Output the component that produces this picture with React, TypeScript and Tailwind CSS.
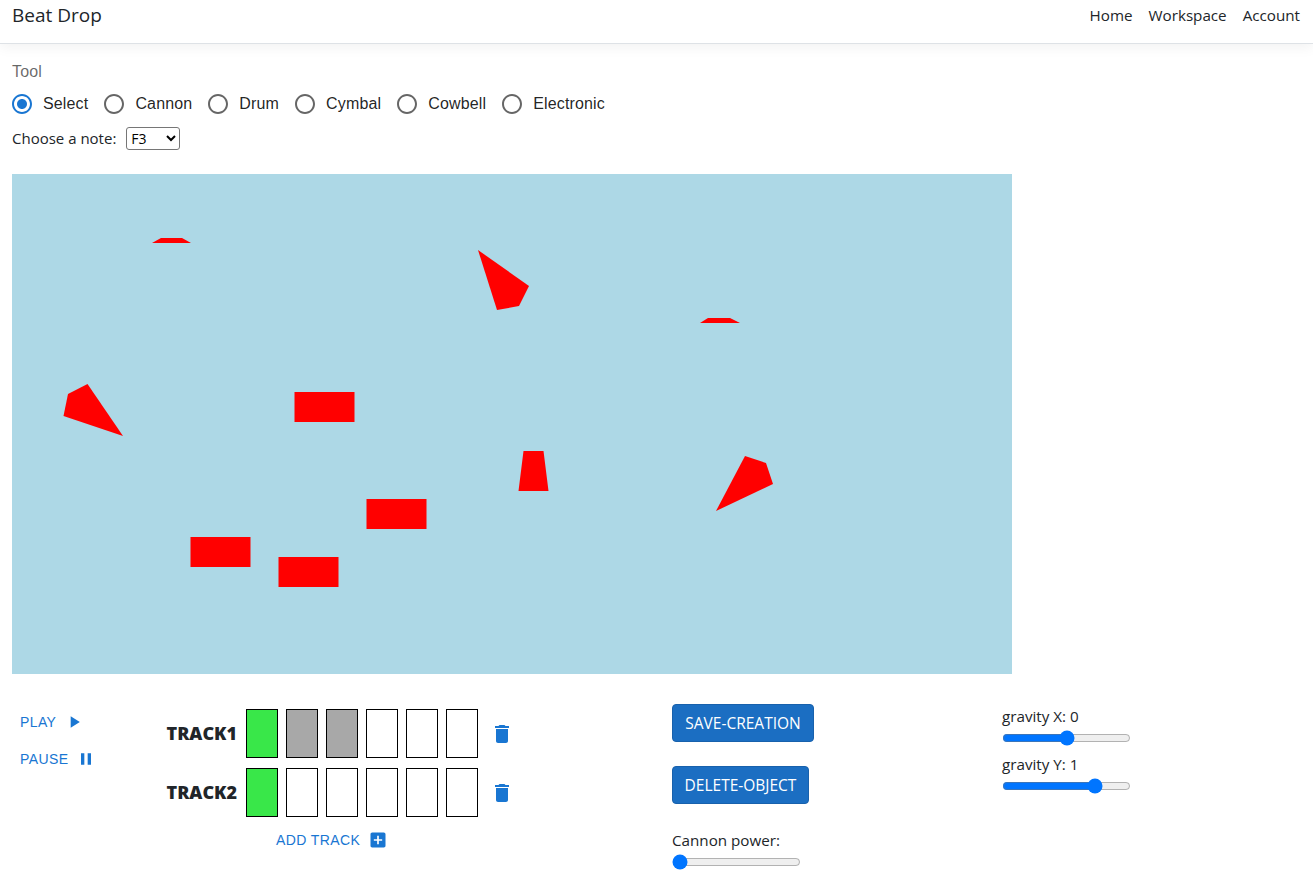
import React from 'react';

const SEGOE = "font-['Open_Sans',sans-serif]";
const MUI = "font-['Liberation_Sans',sans-serif]";

const tools = ['Select', 'Cannon', 'Drum', 'Cymbal', 'Cowbell', 'Electronic'];

const RadioIcon: React.FC<{ checked?: boolean }> = ({ checked }) => (
  <svg viewBox="0 0 24 24" className={`h-6 w-6 ${checked ? 'text-[#1976d2]' : 'text-black/60'}`} fill="currentColor">
    <path d="M12 2C6.48 2 2 6.48 2 12s4.48 10 10 10 10-4.48 10-10S17.52 2 12 2zm0 18c-4.42 0-8-3.58-8-8s3.58-8 8-8 8 3.58 8 8-3.58 8-8 8z" />
    {checked && <path d="M12 7c-2.76 0-5 2.24-5 5s2.24 5 5 5 5-2.24 5-5-2.24-5-5-5z" />}
  </svg>
);

const TrashIcon = () => (
  <svg viewBox="0 0 24 24" className="h-6 w-6 text-[#1976d2]" fill="currentColor">
    <path d="M6 19c0 1.1.9 2 2 2h8c1.1 0 2-.9 2-2V7H6v12zM19 4h-3.5l-1-1h-5l-1 1H5v2h14V4z" />
  </svg>
);

const Track: React.FC<{ name: string; cells: string[] }> = ({ name, cells }) => (
  <div className="flex items-center">
    <div className={`w-[100px] pb-[1px] text-right text-[18px] leading-none font-black text-[#212529] ${SEGOE}`}>{name}</div>
    <div className="ml-[9px] flex gap-2">
      {cells.map((c, i) => (
        <div
          key={i}
          className={`h-[49px] w-[32px] border border-black ${c === 'on' ? 'bg-[#39e749]' : c === 'off' ? 'bg-[#a8a8a8]' : 'bg-white'}`}
        />
      ))}
    </div>
    <div className="ml-3">
      <TrashIcon />
    </div>
  </div>
);

const Slider: React.FC<{ label: string; min: number; max: number; value: number }> = ({ label, min, max, value }) => (
  <div className="flex flex-col items-start">
    <label className={`mb-[2px] text-[15.2px] leading-6 text-[#212529] ${SEGOE}`}>{label}</label>
    <input type="range" min={min} max={max} defaultValue={value} className="h-4 w-[129px] accent-[#0075ff]" />
  </div>
);

export default function App() {
  return (
    <div className="min-h-screen bg-white">
      <header className={`flex h-[44px] items-center justify-between border-b border-[#dee2e6] pl-3 pr-[13px] pb-[12px] shadow-[0_4px_12px_rgba(0,0,0,0.05)] ${SEGOE}`}>
        <span className="text-[19px] text-[#212529]">Beat Drop</span>
        <nav className="flex gap-4 text-[15.2px] text-[#212529]">
          <span>Home</span>
          <span>Workspace</span>
          <span>Account</span>
        </nav>
      </header>

      <main className="px-3">
        <div className={`mt-4 h-[23px] text-[16px] leading-6 tracking-[0.15px] text-black/60 ${MUI}`}>Tool</div>
        <div className="flex h-[42px] items-center">
          {tools.map((t, i) => (
            <label key={t} className="mr-4 -ml-[11px] flex items-center">
              <span className="p-[9px]">
                <RadioIcon checked={i === 0} />
              </span>
              <span className={`text-[16px] leading-6 tracking-[0.15px] text-black/87 ${MUI}`}>{t}</span>
            </label>
          ))}
        </div>
        <div className="mt-[2px] flex h-[23px] items-center gap-[10px]">
          <span className={`text-[15px] text-[#212529] ${SEGOE}`}>Choose a note:</span>
          <select defaultValue="F3" className={`h-[23px] w-[54px] rounded-[3px] border border-[#767676] bg-white text-[14px] text-black ${SEGOE}`}>
            <option>F3</option>
          </select>
        </div>

        <div className="mt-6 h-[500px] w-[1000px] bg-[#add8e6]">
          <svg width="1000" height="500" viewBox="12 174 1000 500" fill="#ff0000">
            <polygon points="152,243 161,238 182,238 191,243" />
            <polygon points="478,250 529,286 519,306 497,310" />
            <polygon points="700,323 708,318 730,318 740,323" />
            <polygon points="87.5,384 123,436 63.5,416 68,394" />
            <polygon points="523.5,451 543.5,451 548.5,491 518.5,491" />
            <polygon points="745,456 766,463 773,484 716,511" />
            <rect x="294.5" y="392" width="60" height="30" />
            <rect x="366.5" y="499" width="60" height="30" />
            <rect x="190.5" y="537" width="60" height="30" />
            <rect x="278.5" y="557" width="60" height="30" />
          </svg>
        </div>

        <div className="mt-[30px] flex items-start">
          <div className={`w-[125px] pl-2 text-[14px] tracking-[0.4px] text-[#1976d2] ${MUI}`}>
            <div className="mt-[3px] flex h-[30px] items-center">
              <span>PLAY</span>
              <svg viewBox="0 0 24 24" className="ml-2 h-5 w-5" fill="currentColor">
                <path d="M8 5v14l11-7z" />
              </svg>
            </div>
            <div className="mt-[7px] flex h-[30px] items-center">
              <span>PAUSE</span>
              <svg viewBox="0 0 24 24" className="ml-2 h-5 w-5" fill="currentColor">
                <path d="M6 19h4V5H6v14zm8-14v14h4V5h-4z" />
              </svg>
            </div>
          </div>

          <div className="mt-[5px] w-[535px]">
            <div className="flex flex-col gap-[10px]">
              <Track name="TRACK1" cells={['on', 'off', 'off', '', '', '']} />
              <Track name="TRACK2" cells={['on', '', '', '', '', '']} />
            </div>
            <div className={`mt-[11px] ml-[139px] flex h-6 items-center text-[14px] tracking-[0.4px] text-[#1976d2] ${MUI}`}>
              <span>ADD TRACK</span>
              <svg viewBox="0 0 24 24" className="ml-2 h-5 w-5" fill="currentColor">
                <path d="M19 3H5c-1.11 0-2 .9-2 2v14c0 1.1.89 2 2 2h14c1.1 0 2-.9 2-2V5c0-1.1-.9-2-2-2zm-2 10h-4v4h-2v-4H7v-2h4V7h2v4h4v2z" />
              </svg>
            </div>
          </div>

          <div className="w-[330px]">
            <button className={`block h-[38px] w-[142px] rounded-[4px] border border-[#1861ac] bg-[#1b6ec2] pt-[2px] text-[15.5px] text-white ${SEGOE}`}>SAVE-CREATION</button>
            <button className={`mt-6 block h-[38px] w-[137px] rounded-[4px] border border-[#1861ac] bg-[#1b6ec2] pt-[2px] text-[15.5px] text-white ${SEGOE}`}>DELETE-OBJECT</button>
            <div className="mt-6">
              <Slider label="Cannon power:" min={0} max={100} value={0} />
            </div>
          </div>

          <div className="flex flex-col gap-[6px]">
            <Slider label="gravity X: 0" min={-2} max={2} value={0} />
            <Slider label="gravity Y: 1" min={-2} max={2} value={1} />
          </div>
        </div>
      </main>
    </div>
  );
}
